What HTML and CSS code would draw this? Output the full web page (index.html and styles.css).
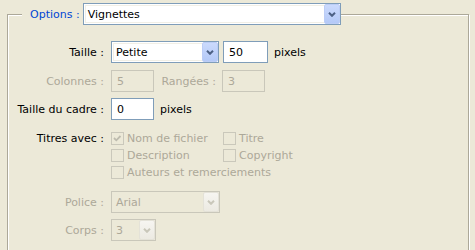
FILE: index.html
```html
<!DOCTYPE html>
<html lang="fr">
  <head>
    <meta charset="UTF-8" />
    <title>Options</title>
    <link rel="stylesheet" href="styles.css">
  </head>
  <body>
    <fieldset class="group">
      <legend class="group-title">
        <span class="title-text">Options :</span>
        <div class="combo combo-main">
          <span class="combo-value">Vignettes</span>
          <span class="combo-btn">
            <svg width="8" height="5" viewBox="0 0 8 5"><polyline points="1,0.8 4,3.8 7,0.8" fill="none" stroke="#4d6185" stroke-width="2"/></svg>
          </span>
        </div>
      </legend>

      <div class="row row-first">
        <span class="lbl">Taille :</span>
        <div class="combo combo-size">
          <span class="combo-value">Petite</span>
          <span class="combo-btn">
            <svg width="8" height="5" viewBox="0 0 8 5"><polyline points="1,0.8 4,3.8 7,0.8" fill="none" stroke="#4d6185" stroke-width="2"/></svg>
          </span>
        </div>
        <input class="field field-px" type="text" value="50" />
        <span class="unit">pixels</span>
      </div>

      <div class="row row-grid">
        <span class="lbl off">Colonnes :</span>
        <input class="field field-sm" type="text" value="5" disabled />
        <span class="lbl-inline off">Rangées :</span>
        <input class="field field-sm" type="text" value="3" disabled />
      </div>

      <div class="row row-frame">
        <span class="lbl">Taille du cadre :</span>
        <input class="field field-sm" type="text" value="0" />
        <span class="unit">pixels</span>
      </div>

      <div class="row row-titles">
        <span class="lbl lbl-top">Titres avec :</span>
        <div class="checks">
          <label class="check off">
            <span class="box">
              <svg width="11" height="11" viewBox="0 0 11 11"><polyline points="2,5 4.3,7.3 8.5,3" fill="none" stroke="#bdbbae" stroke-width="1.8"/></svg>
            </span>Nom de fichier
          </label>
          <label class="check off"><span class="box"></span>Titre</label>
          <label class="check off"><span class="box"></span>Description</label>
          <label class="check off"><span class="box"></span>Copyright</label>
          <label class="check off check-wide"><span class="box"></span>Auteurs et remerciements</label>
        </div>
      </div>

      <div class="row row-font">
        <span class="lbl off">Police :</span>
        <div class="combo combo-off combo-font">
          <span class="combo-value">Arial</span>
          <span class="combo-btn">
            <svg width="8" height="5" viewBox="0 0 8 5"><polyline points="1,0.8 4,3.8 7,0.8" fill="none" stroke="#c9c7ba" stroke-width="2"/></svg>
          </span>
        </div>
      </div>

      <div class="row row-body">
        <span class="lbl off">Corps :</span>
        <div class="combo combo-off combo-body">
          <span class="combo-value">3</span>
          <span class="combo-btn">
            <svg width="8" height="5" viewBox="0 0 8 5"><polyline points="1,0.8 4,3.8 7,0.8" fill="none" stroke="#c9c7ba" stroke-width="2"/></svg>
          </span>
        </div>
      </div>
    </fieldset>
  </body>
</html>
```

FILE: styles.css
```css
body {
  box-sizing: border-box;
  margin: 0;
  padding-top: 3px;
  width: 475px;
  height: 250px;
  overflow: hidden;
  background: #ece9d8;
  font-family: "DejaVu Sans", sans-serif;
  font-size: 11px;
  color: #000;
}
.group {
  box-sizing: border-box;
  width: 462px;
  height: 270px;
  margin: 0 0 0 7px;
  padding: 0;
  min-width: 0;
  border: 1px solid #aca899;
  box-shadow: 1px 1px 0 #fff, inset 1px 1px 0 #fff;
}
.group-title {
  display: flex;
  align-items: center;
  margin-left: 14px;
  padding: 0 0 0 8px;
  background: #ece9d8;
}
.title-text {
  color: #0046d5;
  white-space: nowrap;
}
.combo {
  box-sizing: border-box;
  display: flex;
  height: 22px;
  border: 1px solid #7f9db9;
  background: #fff;
}
.combo-value {
  flex: 1;
  margin: 1px 0 1px 1px;
  padding-left: 2px;
  line-height: 18px;
  border: 1px solid #f1efe6;
  border-right: none;
  white-space: nowrap;
}
.combo-btn {
  box-sizing: border-box;
  display: flex;
  align-items: center;
  justify-content: center;
  width: 16px;
  border: 1px solid #bccdf6;
  border-radius: 2px;
  background: linear-gradient(#cbdafd, #b4c9f7);
}
.combo-main {
  width: 258px;
  margin-left: 3px;
}
.combo-size {
  width: 108px;
}
.combo-font {
  width: 109px;
}
.combo-body {
  width: 45px;
}
.combo-off {
  border-color: #c9c7ba;
  background: #ece9d8;
  color: #aca899;
}
.combo-off .combo-value {
  border-color: #ece9d8;
}
.combo-off .combo-btn {
  border-color: #e4e2d8;
  background: linear-gradient(#f6f5f1, #eceae2);
}
.row {
  display: flex;
  align-items: center;
}
.lbl {
  width: 96px;
  margin-right: 7px;
  text-align: right;
  white-space: nowrap;
}
.off {
  color: #aca899;
}
.field {
  box-sizing: border-box;
  height: 22px;
  padding: 0 5px;
  border: 1px solid #7f9db9;
  background: #fff;
  font: inherit;
  color: #000;
  outline: none;
}
.field:disabled {
  border-color: #c9c7ba;
  background: #ece9d8;
  color: #aca899;
}
.field-px {
  width: 45px;
  margin-left: 4px;
}
.field-sm {
  width: 43px;
}
.unit {
  margin-left: 6px;
}
.lbl-inline {
  width: 62px;
  padding-right: 6px;
  text-align: right;
  white-space: nowrap;
}
.row-first {
  margin-top: 16px;
}
.row-grid {
  margin-top: 7px;
}
.row-frame {
  margin-top: 6px;
}
.row-titles {
  align-items: flex-start;
  margin-top: 10px;
}
.lbl-top {
  line-height: 17px;
}
.checks {
  display: grid;
  grid-template-columns: 112px auto;
}
.check {
  display: flex;
  align-items: center;
  height: 17px;
  white-space: nowrap;
}
.check-wide {
  grid-column: span 2;
}
.box {
  box-sizing: border-box;
  display: flex;
  align-items: center;
  justify-content: center;
  width: 13px;
  height: 13px;
  margin-right: 3px;
  border: 1px solid #cac8bb;
  background: #ece9d8;
}
.row-font {
  margin-top: 10px;
}
.row-body {
  margin-top: 6px;
}
```
